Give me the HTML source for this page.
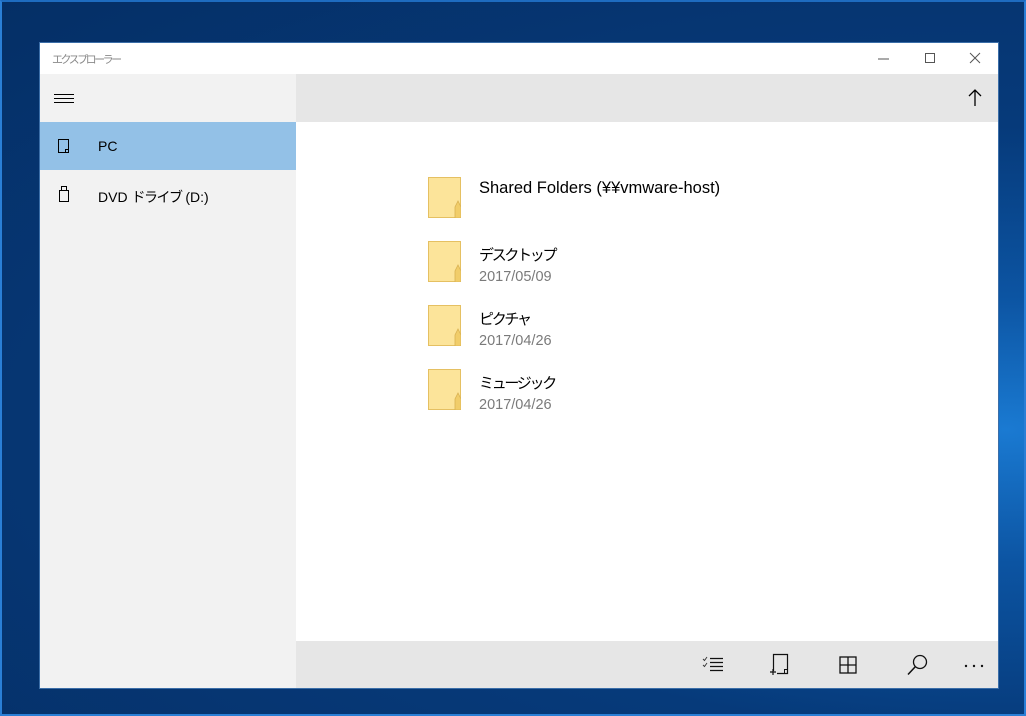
<!DOCTYPE html>
<html><head><meta charset="utf-8">
<style>
*{margin:0;padding:0;box-sizing:border-box}
body{width:1026px;height:716px;overflow:hidden;position:relative;font-family:"Liberation Sans","Noto Sans CJK JP",sans-serif;
background:radial-gradient(ellipse at 98% 60%,#1a7ad2 0%,#0c54a2 22%,#063a7a 50%,#052f66 100%);}
.frame{position:absolute;left:0;top:0;width:1026px;height:716px;border:2px solid #2a7fd6;border-top-color:#1e6cc0;}
.win{position:absolute;left:40px;top:43px;width:958px;height:645px;background:#fff;box-shadow:0 0 0 1px #3b6ea8}
.title{position:absolute;left:12px;top:8px;font-size:11px;color:#8a8a8a;letter-spacing:-2.5px}
.side{position:absolute;left:0;top:31px;width:256px;height:614px;background:#f2f2f2}
.hdr{position:absolute;left:256px;top:31px;width:702px;height:48px;background:#e6e6e6}
.sel{position:absolute;left:0;top:48px;width:256px;height:48px;background:#93c1e7}
.lbl{position:absolute;left:58px;font-size:14px;color:#000;white-space:nowrap}
.jp{letter-spacing:-1.5px}
.bot{position:absolute;left:256px;top:598px;width:702px;height:47px;background:#e6e6e6}
.item{position:absolute;left:388px}
.fold{position:absolute;left:0;top:0;width:33px;height:41px}
.name{position:absolute;left:51px;top:2px;font-size:16.5px;color:#000;white-space:nowrap}
.name.j{font-size:15px;letter-spacing:-2.3px;top:3px}
.date{position:absolute;left:51px;top:28px;font-size:14.5px;color:#7a7a7a;white-space:nowrap}
svg{position:absolute}
</style></head><body>
<div class="frame"></div>
<div class="win">
 <div class="title">エクスプローラー</div>
 <svg style="left:838px;top:10px" width="12" height="12"><line x1="0" y1="6" x2="11" y2="6" stroke="#555" stroke-width="1"/></svg>
 <svg style="left:884px;top:9px" width="12" height="12"><rect x="1.5" y="1.5" width="9" height="9" fill="none" stroke="#555"/></svg>
 <svg style="left:929px;top:9px" width="12" height="12"><path d="M1 1L11 11M11 1L1 11" stroke="#555"/></svg>
 <div class="side">
  <svg style="left:14px;top:19px" width="20" height="12"><path d="M0 1.5H20M0 5.5H20M0 9.5H20" stroke="#000"/></svg>
  <div class="sel"></div>
  <svg style="left:18px;top:65px" width="12" height="15"><path d="M0.5 0.5H10.5V13.5H0.5Z" fill="none" stroke="#000"/><rect x="7.5" y="10.5" width="3" height="3" fill="none" stroke="#000"/></svg>
  <div class="lbl" style="top:64px">PC</div>
  <svg style="left:19px;top:112px" width="10" height="17"><rect x="2.5" y="0.5" width="5" height="4" fill="none" stroke="#000"/><rect x="0.5" y="4.5" width="9" height="11" fill="none" stroke="#000"/></svg>
  <div class="lbl" style="top:113px">DVD <span class="jp">ドライブ</span> (D:)</div>
 </div>
 <div class="hdr">
  <svg style="left:672px;top:15px" width="14" height="18"><path d="M7 1V17M1 7L7 1L13 7" fill="none" stroke="#000" stroke-width="1.3"/></svg>
 </div>
 <div class="item" style="top:134px">
  <svg class="fold" viewBox="0 0 33 41"><rect x="0.5" y="0.5" width="32" height="40" fill="#fce49a" stroke="#e5c062"/><path d="M27 41V30L30 24L33 30V41Z" fill="#f1cd6a" stroke="#d9b252" stroke-width="0.8"/></svg>
  <div class="name">Shared Folders (¥¥vmware-host)</div>
 </div>
 <div class="item" style="top:198px">
  <svg class="fold" viewBox="0 0 33 41"><rect x="0.5" y="0.5" width="32" height="40" fill="#fce49a" stroke="#e5c062"/><path d="M27 41V30L30 24L33 30V41Z" fill="#f1cd6a" stroke="#d9b252" stroke-width="0.8"/></svg>
  <div class="name j">デスクトップ</div><div class="date">2017/05/09</div>
 </div>
 <div class="item" style="top:262px">
  <svg class="fold" viewBox="0 0 33 41"><rect x="0.5" y="0.5" width="32" height="40" fill="#fce49a" stroke="#e5c062"/><path d="M27 41V30L30 24L33 30V41Z" fill="#f1cd6a" stroke="#d9b252" stroke-width="0.8"/></svg>
  <div class="name j">ピクチャ</div><div class="date">2017/04/26</div>
 </div>
 <div class="item" style="top:326px">
  <svg class="fold" viewBox="0 0 33 41"><rect x="0.5" y="0.5" width="32" height="40" fill="#fce49a" stroke="#e5c062"/><path d="M27 41V30L30 24L33 30V41Z" fill="#f1cd6a" stroke="#d9b252" stroke-width="0.8"/></svg>
  <div class="name j">ミュージック</div><div class="date">2017/04/26</div>
 </div>
 <div class="bot">
  <svg style="left:406px;top:15px" width="22" height="16"><path d="M1 3L2.5 4.5L5 1M1 9L2.5 10.5L5 7" fill="none" stroke="#333" stroke-width="0.9"/><path d="M8 2.5H21M8 6.5H21M8 10.5H21M8 14.5H21" stroke="#111" stroke-width="1.2"/></svg>
  <svg style="left:474px;top:12px" width="20" height="23"><path d="M3.5 18V1.5H17.5V20.5H7" fill="none" stroke="#111" stroke-width="1.2"/><rect x="14.5" y="16.5" width="3" height="4" fill="none" stroke="#111"/><path d="M0 19H6M3 16V22" stroke="#111" stroke-width="1.2"/></svg>
  <svg style="left:543px;top:15px" width="18" height="18"><rect x="1" y="1" width="16" height="16" fill="none" stroke="#111" stroke-width="1.3"/><path d="M9 1V17M1 9H17" stroke="#111" stroke-width="1.3"/></svg>
  <svg style="left:611px;top:13px" width="22" height="22"><circle cx="13" cy="8" r="6.5" fill="none" stroke="#111" stroke-width="1.3"/><path d="M8.5 12.5L1 20.5" stroke="#111" stroke-width="1.5"/></svg>
  <svg style="left:668px;top:23px" width="20" height="4"><circle cx="2" cy="2" r="1.2" fill="#111"/><circle cx="10" cy="2" r="1.2" fill="#111"/><circle cx="18" cy="2" r="1.2" fill="#111"/></svg>
 </div>
</div>
</body></html>
